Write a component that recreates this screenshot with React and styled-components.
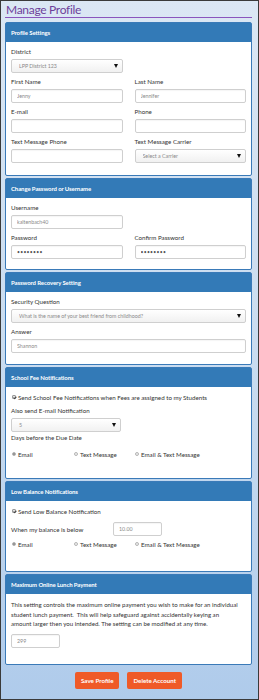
import React from "react";
import styled, { createGlobalStyle } from "styled-components";

const GlobalStyle = createGlobalStyle`
  html, body {
    margin: 0;
    padding: 0;
  }
  body {
    font-family: Lato, "Liberation Sans", sans-serif;
  }
  * {
    box-sizing: border-box;
  }
`;

const Page = styled.div`
  width: 259px;
  height: 700px;
  border: 1px solid #3a3a3a;
  background: linear-gradient(#dbe7f4, #c6daef 60%, #afcbeb);
  padding: 0 6px 0 4px;
  display: flex;
  flex-direction: column;
  overflow: hidden;
`;

const Title = styled.h1`
  margin: 0;
  height: 17px;
  padding-left: 1px;
  font-size: 12px;
  line-height: 18px;
  font-weight: 400;
  color: #6e3f9a;
  border-bottom: 1px solid #8a55bd;
  letter-spacing: -0.3px;
`;

const Panel = styled.section`
  margin-top: ${(p) => p.top || 2}px;
  background: #fff;
  border: 1px solid #3a7ab8;
  border-radius: 2px;
`;

const PanelHead = styled.div`
  height: 19px;
  background: #337ab7;
  color: #fff;
  font-size: 6px;
  font-weight: 700;
  display: flex;
  align-items: center;
  padding-left: 5px;
  letter-spacing: -0.1px;
`;

const PanelBody = styled.div`
  padding: ${(p) => p.pt || 5}px 5px ${(p) => p.pb || 12}px 5px;
  display: flex;
  flex-direction: column;
  gap: 4px;
`;

const Grid = styled.div`
  display: grid;
  grid-template-columns: ${(p) => (p.full ? "1fr" : "1fr 1fr")};
  column-gap: 12px;
`;

const Field = styled.div`
  display: flex;
  flex-direction: column;
`;

const Label = styled.label`
  display: block;
  height: 10px;
  line-height: 10px;
  margin-bottom: 2px;
  font-size: 6.2px;
  color: #333;
`;

const Input = styled.input`
  display: block;
  height: 14px;
  width: ${(p) => (p.w ? `${p.w}px` : "100%")};
  margin: 0;
  border: 1px solid #cfcfcf;
  border-radius: 2px;
  padding: 0 5px;
  font-family: inherit;
  font-size: 5.3px;
  color: #8a8a8a;
  background: #fff;
  outline: none;
  box-shadow: inset 0 1px 1px rgba(0, 0, 0, 0.04);
  &[type="password"] {
    font-size: 5px;
    letter-spacing: 0.3px;
    color: #555;
  }
`;

const SelectWrap = styled.div`
  position: relative;
  height: 14px;
  width: ${(p) => (p.w ? `${p.w}px` : "100%")};
`;

const Select = styled.select`
  display: block;
  appearance: none;
  width: 100%;
  height: 14px;
  margin: 0;
  border: 1px solid #cfcfcf;
  border-radius: 2px;
  padding: 0 0 0 7px;
  font-family: inherit;
  font-size: 5.3px;
  line-height: 12px;
  color: #8a8a8a;
  background: linear-gradient(#fff, #f1f1f1);
  outline: none;
`;

const Caret = styled.span`
  position: absolute;
  right: 5px;
  top: 5px;
  width: 0;
  height: 0;
  border-left: 2.5px solid transparent;
  border-right: 2.5px solid transparent;
  border-top: 4px solid #111;
  pointer-events: none;
`;

const Line = styled.div`
  height: 10px;
  display: flex;
  align-items: center;
  gap: 2px;
  font-size: 6.2px;
  color: #333;
`;

const BalanceRow = styled.div`
  display: grid;
  grid-template-columns: 102px 49px;
  align-items: center;
  height: 10px;
  margin-top: 2px;
  font-size: 6.2px;
  color: #333;
`;

const Check = styled.span`
  position: relative;
  width: 4px;
  height: 4px;
  margin-left: 1px;
  border: 1px solid #9a9a9a;
  background: #e2e2e2;
  border-radius: 1px;
  &::after {
    content: "";
    position: absolute;
    left: 0.5px;
    top: -0.5px;
    width: 1px;
    height: 2px;
    border-right: 0.8px solid #444;
    border-bottom: 0.8px solid #444;
    transform: rotate(45deg);
  }
`;

const RadioRow = styled.div`
  display: grid;
  grid-template-columns: 62px 61px auto;
  height: 10px;
  align-items: center;
  margin-top: 3px;
`;

const RadioItem = styled.span`
  display: flex;
  align-items: center;
  gap: 2px;
  font-size: 6.2px;
  color: #333;
`;

const Radio = styled.span`
  width: 4px;
  height: 4px;
  margin-left: 1px;
  border-radius: 50%;
  border: 1px solid #b5b5b5;
  background: ${(p) => (p.on ? "#8c8c8c" : "#eee")};
`;

const Para = styled.p`
  margin: 0;
  font-size: 6.1px;
  line-height: 9.5px;
  color: #333;
`;

const Buttons = styled.div`
  margin-top: 7px;
  display: flex;
  justify-content: center;
  gap: 8px;
`;

const Button = styled.button`
  height: 17px;
  padding: 0 6px;
  border: none;
  border-radius: 2px;
  background: #ef5a28;
  color: #fff;
  font-family: inherit;
  font-size: 6.2px;
  font-weight: 700;
`;

const SelectBox = ({ w, value }) => (
  <SelectWrap w={w}>
    <Select defaultValue={value}>
      <option>{value}</option>
    </Select>
    <Caret />
  </SelectWrap>
);

const Radios = () => (
  <RadioRow>
    <RadioItem>
      <Radio on />
      Email
    </RadioItem>
    <RadioItem>
      <Radio />
      Text Message
    </RadioItem>
    <RadioItem>
      <Radio />
      Email &amp; Text Message
    </RadioItem>
  </RadioRow>
);

export default function App() {
  return (
    <Page>
      <GlobalStyle />
      <Title>Manage Profile</Title>

      <Panel top={4}>
        <PanelHead>Profile Settings</PanelHead>
        <PanelBody>
          <Grid>
            <Field>
              <Label>District</Label>
              <SelectBox value="LPP District 123" />
            </Field>
          </Grid>
          <Grid>
            <Field>
              <Label>First Name</Label>
              <Input defaultValue="Jenny" />
            </Field>
            <Field>
              <Label>Last Name</Label>
              <Input defaultValue="Jennifer" />
            </Field>
          </Grid>
          <Grid>
            <Field>
              <Label>E-mail</Label>
              <Input />
            </Field>
            <Field>
              <Label>Phone</Label>
              <Input />
            </Field>
          </Grid>
          <Grid>
            <Field>
              <Label>Text Message Phone</Label>
              <Input />
            </Field>
            <Field>
              <Label>Text Message Carrier</Label>
              <SelectBox value="Select a Carrier" />
            </Field>
          </Grid>
        </PanelBody>
      </Panel>

      <Panel>
        <PanelHead>Change Password or Username</PanelHead>
        <PanelBody pb={10}>
          <Grid>
            <Field>
              <Label>Username</Label>
              <Input defaultValue="kaltenbach40" />
            </Field>
          </Grid>
          <Grid>
            <Field>
              <Label>Password</Label>
              <Input type="password" defaultValue="12345678" />
            </Field>
            <Field>
              <Label>Confirm Password</Label>
              <Input type="password" defaultValue="12345678" />
            </Field>
          </Grid>
        </PanelBody>
      </Panel>

      <Panel>
        <PanelHead>Password Recovery Setting</PanelHead>
        <PanelBody pb={11}>
          <Grid full>
            <Field>
              <Label>Security Question</Label>
              <SelectBox value="What is the name of your best friend from childhood?" />
            </Field>
          </Grid>
          <Grid full>
            <Field>
              <Label>Answer</Label>
              <Input defaultValue="Shannon" />
            </Field>
          </Grid>
        </PanelBody>
      </Panel>

      <Panel>
        <PanelHead>School Fee Notifications</PanelHead>
        <PanelBody pb={19}>
          <Line>
            <Check />
            Send School Fee Notifications when Fees are assigned to my Students
          </Line>
          <Field>
            <Label>Also send E-mail Notification</Label>
            <SelectBox w={110} value="5" />
            <Line>Days before the Due Date</Line>
          </Field>
          <Radios />
        </PanelBody>
      </Panel>

      <Panel>
        <PanelHead>Low Balance Notifications</PanelHead>
        <PanelBody pb={22}>
          <Line>
            <Check />
            Send Low Balance Notification
          </Line>
          <BalanceRow>
            <span>When my balance is below</span>
            <Input w={49} defaultValue="10.00" />
          </BalanceRow>
          <Radios />
        </PanelBody>
      </Panel>

      <Panel>
        <PanelHead>Maximum Online Lunch Payment</PanelHead>
        <PanelBody pt={6} pb={16}>
          <Para>
            This setting controls the maximum online payment you wish to make
            for an individual
            <br />
            student lunch payment. &nbsp;This will help safeguard against
            accidentally keying an
            <br />
            amount larger then you intended. The setting can be modified at any
            time.
          </Para>
          <Input w={49} defaultValue="299" style={{ marginTop: 1 }} />
        </PanelBody>
      </Panel>

      <Buttons>
        <Button>Save Profile</Button>
        <Button>Delete Account</Button>
      </Buttons>
    </Page>
  );
}
